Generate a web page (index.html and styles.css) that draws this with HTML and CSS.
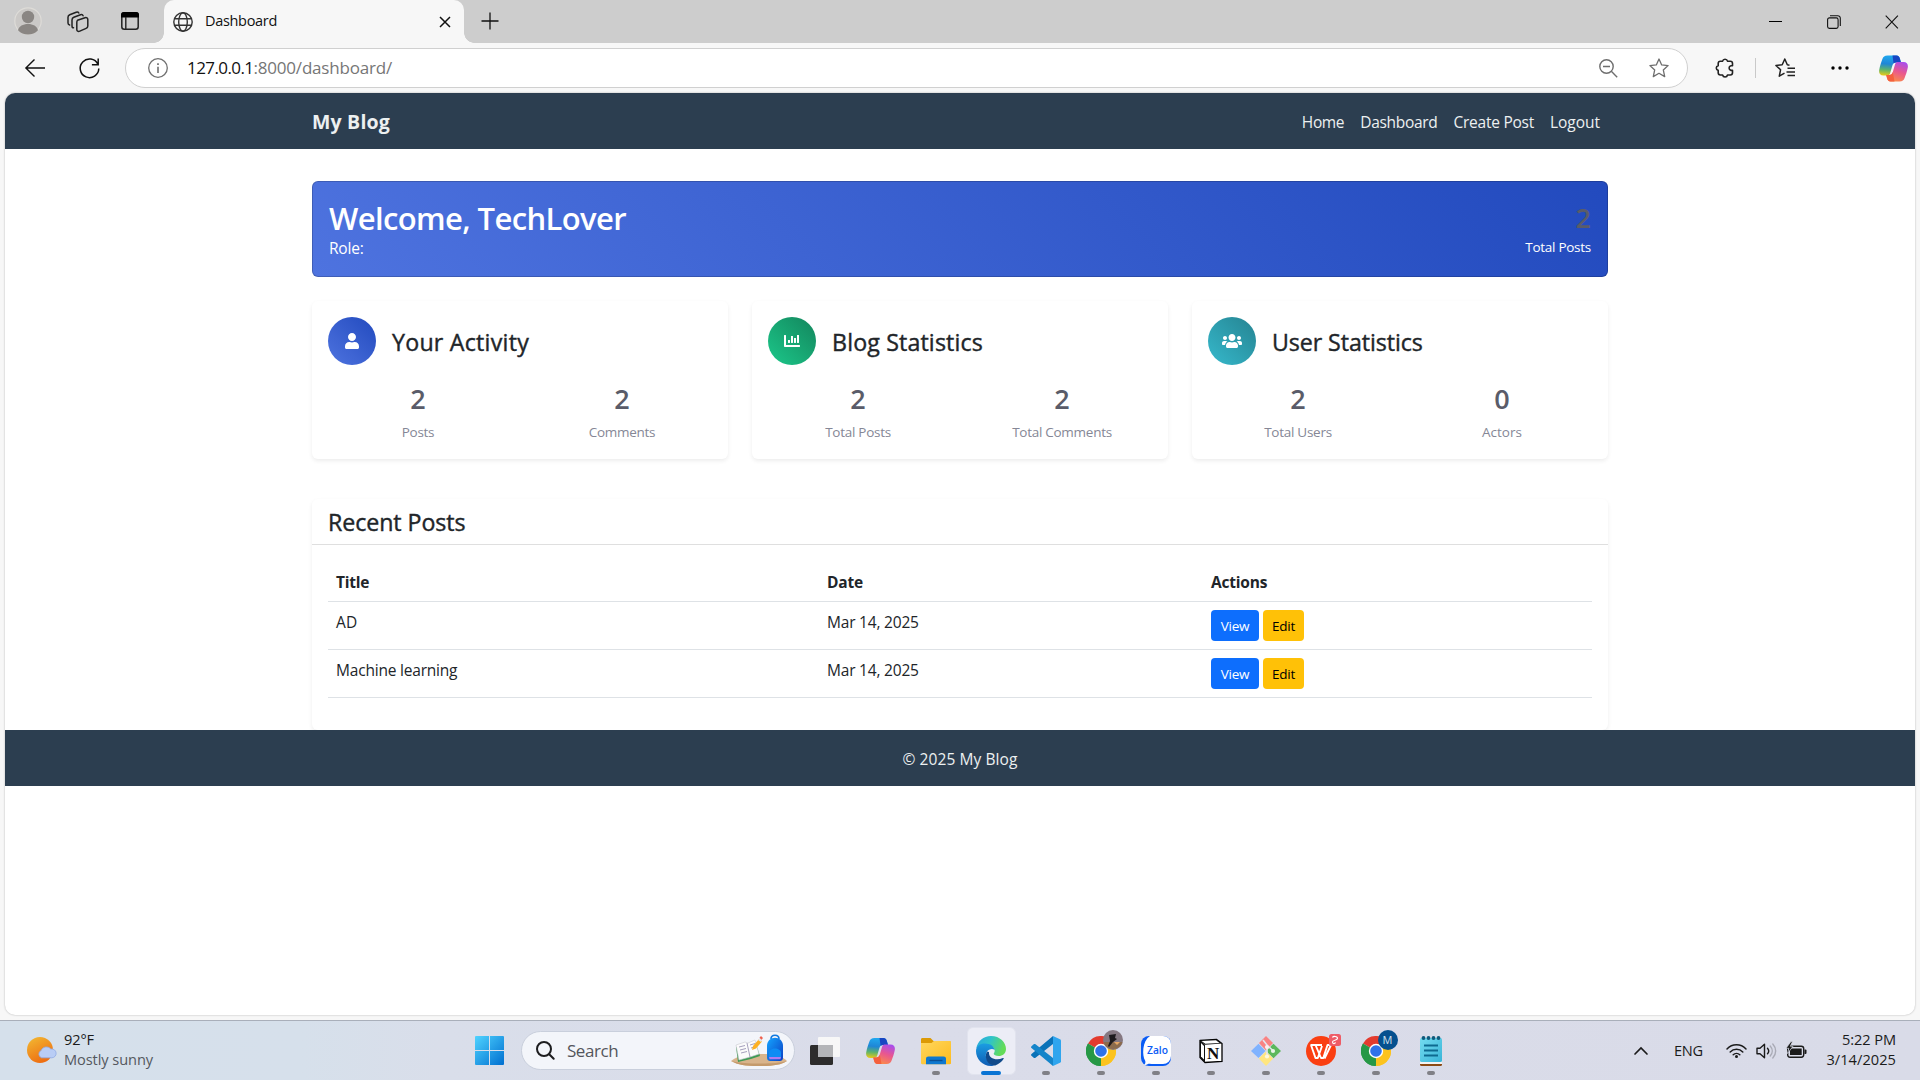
FILE: index.html
```html
<!DOCTYPE html>
<html lang="en">
<head>
<meta charset="utf-8">
<title>Dashboard</title>
<link rel="stylesheet" href="styles.css">
</head>
<body>
<svg class="defs" width="0" height="0">
  <defs>
    <linearGradient id="cpA" x1="0.2" y1="0" x2="0.1" y2="1"><stop offset="0" stop-color="#20a7ee"/><stop offset=".4" stop-color="#1f86d6"/><stop offset=".7" stop-color="#5fb46a"/><stop offset="1" stop-color="#f2cb12"/></linearGradient>
    <linearGradient id="cpB" x1=".8" y1="0" x2=".4" y2="1"><stop offset="0" stop-color="#a64df0"/><stop offset=".5" stop-color="#e9578f"/><stop offset="1" stop-color="#fb8b4a"/></linearGradient>
    <linearGradient id="sun" x1="0" y1="0" x2=".5" y2="1"><stop offset="0" stop-color="#f2bb33"/><stop offset="1" stop-color="#ee6f12"/></linearGradient>
    <linearGradient id="win" x1="0" y1="0" x2="1" y2="1"><stop offset="0" stop-color="#4fd3ff"/><stop offset="1" stop-color="#006fd0"/></linearGradient>
    <linearGradient id="fold" x1="0" y1="0" x2="1" y2="1"><stop offset="0" stop-color="#ffd75e"/><stop offset="1" stop-color="#fdbb1e"/></linearGradient>
    <linearGradient id="edA" x1="0" y1="0" x2="1" y2=".3"><stop offset="0" stop-color="#2aa6e0"/><stop offset=".5" stop-color="#2fc3c9"/><stop offset="1" stop-color="#63dc58"/></linearGradient>
    <linearGradient id="edB" x1="0" y1="0" x2="0" y2="1"><stop offset="0" stop-color="#1b9de2"/><stop offset="1" stop-color="#0f5cb4"/></linearGradient>
    <linearGradient id="bag" x1="0" y1="0" x2="1" y2="1"><stop offset="0" stop-color="#14a4ff"/><stop offset="1" stop-color="#0b3fc4"/></linearGradient>
    <linearGradient id="note" x1="0" y1="0" x2="1" y2="1"><stop offset="0" stop-color="#74dcf0"/><stop offset="1" stop-color="#39b4d8"/></linearGradient>
    <symbol id="copilot" viewBox="0 0 29 26">
      <path d="M8.5 0h9c2 0 3 1.500 3.500 3.500l1 3.500h-5c-2 0-3 1-3.600 3l-2.200 7.500C10.600 19.500 9.500 20 8 20H4.500C1 20-.3 17.500.2 14.500 1 10 2.300 6.500 3.300 3.800 4.200 1.200 5.500 0 8.500 0z" fill="url(#cpA)"/>
      <path d="M13.500 0h4c2 0 3 1.500 3.500 3.500l1 3.500h-5c-1 0-1.800.3-2.400.9z" fill="#1846c2"/>
      <path d="M20.500 26h-9c-2 0-3-1.500-3.500-3.500L7.200 19.500h3c2 0 3-1 3.600-3L16 9c.6-2 1.700-2.500 3.200-2.500h5.300c3.500 0 4.800 2.500 4.300 5.500-.8 4.500-2.100 7.500-3.100 10.200-.9 2.600-2.200 3.800-5.200 3.800z" fill="url(#cpB)"/>
      <path d="M15.500 26h-4c-2 0-3-1.500-3.500-3.500L7.200 19.500h3c2 0 2.900-.8 3.600-3z" fill="#f4603e"/>
    </symbol>
    <symbol id="chrome" viewBox="0 0 30 30">
      <path d="M15 15 2 7.500A15 15 0 0 1 28 7.500z" fill="#e33b2e"/>
      <path d="M15 15 28 7.500A15 15 0 0 1 15 30z" fill="#fcc31e"/>
      <path d="M15 15 15 30A15 15 0 0 1 2 7.500z" fill="#269846"/>
      <path d="M15 8.200h13.400A15 15 0 0 1 15 30l6-11.500z" fill="#fcc31e"/>
      <path d="M2 7.500 9 18.500l6 3.500-1 8A15 15 0 0 1 2 7.500z" fill="#269846"/>
      <circle cx="15" cy="15" r="7.200" fill="#fff"/><circle cx="15" cy="15" r="5.800" fill="#2f72e8"/>
    </symbol>
  </defs>
</svg>
<div class="screen">
  <header class="tabstrip">
    <svg class="avatar" width="28" height="28" viewBox="0 0 28 28"><circle cx="14" cy="14" r="13.200" fill="#cbc9c7" stroke="#dedcd8" stroke-width="1.200"/><circle cx="14" cy="10" r="6.200" fill="#8a8683"/><path d="M4 23.200c1-4 5-6.200 10-6.200s9 2.200 10 6.200A13.500 13.500 0 0 1 14 27.500 13.500 13.500 0 0 1 4 23.200z" fill="#8a8683"/></svg>
    <svg class="workspaces" width="22" height="22" viewBox="0 0 22 22" fill="none" stroke="#222" stroke-width="1.500" stroke-linejoin="round" stroke-linecap="round"><path d="M10.500 9.200l7.500-2.500c1.600-.5 2.800.2 2.800 1.800v6.500c0 1.200-.6 2-1.700 2.400l-6.300 2.700c-1.700.7-3 0-3-1.700v-6.700c0-1.200.2-2 .7-2.500z"/><path d="M6.500 16.800c-1 0-1.500-.8-1.500-1.900V9c0-1.400.6-2.200 1.800-2.700l6.700-2.500c1.200-.4 2.200-.1 2.600.9"/><path d="M2.600 14C1.500 13.800 1 13 1 12V6.300C1 5 1.600 4.200 2.700 3.700l6.500-2.400c1.200-.4 2.100-.2 2.600.7"/></svg>
    <svg class="tabactions" width="18" height="18" viewBox="0 0 18 18"><rect x=".8" y=".8" width="16.400" height="16.400" rx="2.500" fill="none" stroke="#222" stroke-width="1.500"/><path d="M0 5.500V3a3 3 0 0 1 3-3h12a3 3 0 0 1 3 3v2.500z" fill="#000"/><path d="M4.800 5v12" stroke="#222" stroke-width="1.400"/></svg>
    <div class="tab">
      <svg width="20" height="20" viewBox="0 0 20 20" fill="none" stroke="#333" stroke-width="1.400"><circle cx="10" cy="10" r="9.200"/><ellipse cx="10" cy="10" rx="4.300" ry="9.200"/><path d="M1.500 6.800h17M1.500 13.200h17"/></svg>
      <span class="tab-title">Dashboard</span>
      <svg class="tab-close" width="12" height="12" viewBox="0 0 12 12" stroke="#111" stroke-width="1.500"><path d="M1 1l10 10M11 1L1 11"/></svg>
    </div>
    <svg class="newtab" width="18" height="18" viewBox="0 0 18 18" stroke="#111" stroke-width="1.300"><path d="M.5 9h17M9 .5v17"/></svg>
    <div class="winctl">
      <svg width="14" height="14" viewBox="0 0 14 14" stroke="#000"><path d="M0 6.500h13"/></svg>
      <svg width="14" height="14" viewBox="0 0 14 14" fill="none" stroke="#111" stroke-width="1.100"><rect x=".6" y="2.900" width="10.500" height="10.500" rx="1.800"/><path d="M3 .7h7.800a2.500 2.500 0 0 1 2.500 2.500V11"/></svg>
      <svg width="14" height="14" viewBox="0 0 14 14" stroke="#111" stroke-width="1.100"><path d="M.7.700l12.200 12.600M12.900.700L.7 13.300"/></svg>
    </div>
  </header>
  <div class="toolbar">
    <svg class="back" width="20" height="18" viewBox="0 0 20 18" fill="none" stroke="#111" stroke-width="1.400"><path d="M.8 9H20M9.500.6L.9 9l8.600 8.400"/></svg>
    <svg class="reload" width="21" height="21" viewBox="0 0 21 21" fill="none" stroke="#111" stroke-width="1.500"><path d="M18.900 6.300A9.300 9.300 0 1 0 19.800 10.500M19.200.500v6.300h-6.300"/></svg>
    <div class="address">
      <svg width="20" height="20" viewBox="0 0 20 20" fill="none" stroke="#707070" stroke-width="1.300"><circle cx="10" cy="10" r="9.300"/><path d="M10 8.800V15" stroke-width="1.600"/><path d="M10 5.200v1.800" stroke-width="1.700"/></svg>
      <span class="url-host">127.0.0.1</span><span class="url-path">:8000/dashboard/</span>
      <svg class="zoomout" width="19" height="19" viewBox="0 0 19 19" fill="none" stroke="#6e6e6e" stroke-width="1.400"><circle cx="7.500" cy="7.500" r="6.700"/><path d="M4 7.500h7M12.300 12.300l5.900 5.900"/></svg>
      <svg class="star" width="20" height="20" viewBox="0 0 20 20" fill="none" stroke="#6e6e6e" stroke-width="1.300" stroke-linejoin="round"><path d="M10 1l2.700 5.900 6.400.7-4.800 4.300 1.400 6.700L10 15.300l-5.700 3.300 1.400-6.700L.9 7.600l6.400-.7z"/></svg>
    </div>
    <svg class="puzzle" width="20" height="20" viewBox="0 0 20 20" fill="none" stroke="#222" stroke-width="1.600" stroke-linejoin="round"><path d="M3.200 5.400C3.200 4 4 3.200 5.400 3.200h2.200a2.500 2.500 0 0 1 4.900 0h2.800c1.400 0 2.200.8 2.200 2.200v2.300h-1.500a2.400 2.400 0 0 0 0 4.700h1.500v2.400c0 1.400-.8 2.200-2.200 2.200h-2.800a2.500 2.500 0 0 1-4.900 0H5.400c-1.400 0-2.200-.8-2.200-2.200v-2.400a2.400 2.400 0 0 1 0-4.700z"/></svg>
    <i class="sep"></i>
    <svg class="favs" width="21" height="20" viewBox="0 0 21 20" fill="none" stroke="#222" stroke-width="1.500" stroke-linejoin="round"><path d="M14.500 7.200L12.300 6.800 9.800 1 7.200 6.800.9 7.500l4.700 4.200-1.300 6.500 5.200-3M12.500 10.300H20M11.500 14H20M12.500 17.500H20" /></svg>
    <svg class="dots" width="18" height="4" viewBox="0 0 18 4"><circle cx="2" cy="2" r="1.700"/><circle cx="9" cy="2" r="1.700"/><circle cx="16" cy="2" r="1.700"/></svg>
    <svg class="cop" width="29" height="27"><use href="#copilot"/></svg>
  </div>
  <div class="viewport">
    <nav class="navbar">
      <a class="brand">My Blog</a>
      <div class="links"><a class="l1">Home</a><a class="l2">Dashboard</a><a class="l3">Create Post</a><a class="l4">Logout</a></div>
    </nav>
    <main class="container">
      <section class="welcome">
        <div><h2>Welcome, TechLover</h2><p>Role:</p></div>
        <div class="total"><div class="value">2</div><div class="label">Total Posts</div></div>
      </section>
      <section class="cards">
        <article class="card">
          <div class="card-head"><span class="bubble blue"><svg width="14" height="16" viewBox="0 0 448 512" fill="#fff"><path d="M224 256c70.700 0 128-57.300 128-128S294.700 0 224 0 96 57.300 96 128s57.300 128 128 128zm89.600 32h-16.700c-22.200 10.200-46.900 16-72.900 16s-50.600-5.800-72.900-16h-16.700C60.200 288 0 348.200 0 422.400V464c0 26.500 21.500 48 48 48h352c26.500 0 48-21.500 48-48v-41.600c0-74.200-60.200-134.400-134.400-134.400z"/></svg></span><h4 class="h-act">Your Activity</h4></div>
          <div class="stats"><div><div class="value">2</div><div class="label">Posts</div></div><div><div class="value">2</div><div class="label">Comments</div></div></div>
        </article>
        <article class="card">
          <div class="card-head"><span class="bubble green"><svg width="16" height="16" viewBox="0 0 512 512" fill="#fff"><path d="M332.800 320h38.400c6.400 0 12.800-6.400 12.800-12.800V172.800c0-6.400-6.400-12.800-12.800-12.800h-38.400c-6.400 0-12.800 6.400-12.800 12.800v134.400c0 6.400 6.400 12.800 12.800 12.800zm96 0h38.400c6.400 0 12.800-6.400 12.800-12.800V76.800c0-6.400-6.400-12.800-12.800-12.800h-38.400c-6.400 0-12.800 6.400-12.800 12.800v230.400c0 6.400 6.400 12.800 12.800 12.800zm-288 0h38.400c6.400 0 12.800-6.400 12.800-12.800v-70.400c0-6.400-6.400-12.800-12.800-12.800h-38.400c-6.400 0-12.800 6.400-12.800 12.800v70.400c0 6.400 6.400 12.800 12.800 12.800zm96 0h38.400c6.400 0 12.800-6.400 12.800-12.800V108.800c0-6.400-6.400-12.800-12.800-12.800h-38.400c-6.400 0-12.800 6.400-12.800 12.800v198.400c0 6.400 6.400 12.800 12.800 12.800zM496 384H64V80c0-8.840-7.160-16-16-16H16C7.160 64 0 71.160 0 80v336c0 17.670 14.330 32 32 32h464c8.840 0 16-7.160 16-16v-32c0-8.840-7.160-16-16-16z"/></svg></span><h4 class="h-blog">Blog Statistics</h4></div>
          <div class="stats"><div><div class="value">2</div><div class="label">Total Posts</div></div><div><div class="value">2</div><div class="label">Total Comments</div></div></div>
        </article>
        <article class="card">
          <div class="card-head"><span class="bubble teal"><svg width="20" height="16" viewBox="0 0 640 512" fill="#fff"><path d="M96 224c35.300 0 64-28.700 64-64s-28.700-64-64-64-64 28.700-64 64 28.700 64 64 64zm448 0c35.300 0 64-28.700 64-64s-28.700-64-64-64-64 28.700-64 64 28.700 64 64 64zm32 32h-64c-17.600 0-33.500 7.100-45.100 18.600 40.300 22.100 68.900 62 75.100 109.400h66c17.700 0 32-14.300 32-32v-32c0-35.300-28.700-64-64-64zm-256 0c61.900 0 112-50.100 112-112S381.900 32 320 32 208 82.100 208 144s50.100 112 112 112zm76.800 32h-8.300c-20.800 10-43.900 16-68.500 16s-47.600-6-68.500-16h-8.300C179.600 288 128 339.600 128 403.200V432c0 26.500 21.500 48 48 48h288c26.500 0 48-21.500 48-48v-28.800c0-63.600-51.600-115.200-115.200-115.200zm-223.700-13.400C161.500 263.100 145.600 256 128 256H64c-35.300 0-64 28.700-64 64v32c0 17.700 14.300 32 32 32h65.900c6.300-47.400 34.900-87.300 75.200-109.400z"/></svg></span><h4 class="h-user">User Statistics</h4></div>
          <div class="stats"><div><div class="value">2</div><div class="label">Total Users</div></div><div><div class="value">0</div><div class="label actors">Actors</div></div></div>
        </article>
      </section>
      <section class="recent">
        <div class="recent-head"><h4>Recent Posts</h4></div>
        <div class="recent-body">
          <table>
            <thead><tr><th class="c1">Title</th><th class="c2">Date</th><th>Actions</th></tr></thead>
            <tbody>
              <tr><td><span class="short">AD</span></td><td>Mar 14, 2025</td><td><div class="btns"><a class="btn view">View</a><a class="btn edit">Edit</a></div></td></tr>
              <tr><td>Machine learning</td><td>Mar 14, 2025</td><td><div class="btns"><a class="btn view">View</a><a class="btn edit">Edit</a></div></td></tr>
            </tbody>
          </table>
        </div>
      </section>
    </main>
    <footer class="footer">© 2025 My Blog</footer>
  </div>
  <div class="taskbar">
    <div class="weather">
      <svg width="30" height="28" viewBox="0 0 30 28"><circle cx="13" cy="14" r="13" fill="url(#sun)"/><path d="M14.500 21.800a4 4 0 0 1-.3-7.400 5.600 5.600 0 0 1 9.600-1.300 4.400 4.400 0 1 1 1 8.700z" fill="#b9cdf5" stroke="#8fabe6" stroke-width=".8"/></svg>
      <div><div class="temp">92°F</div><div class="cond">Mostly sunny</div></div>
    </div>
    <div class="tile start"><svg width="29" height="29" viewBox="0 0 29 29" fill="url(#win)"><path d="M1 0h13v14H0V1a1 1 0 0 1 1-1zM15 0h13a1 1 0 0 1 1 1v13H15zM0 15h14v14H1a1 1 0 0 1-1-1zM15 15h14v13a1 1 0 0 1-1 1H15z"/></svg></div>
    <div class="search">
      <svg width="19" height="19" viewBox="0 0 19 19" fill="none" stroke="#1d1d1f" stroke-width="2" stroke-linecap="round"><circle cx="8" cy="8" r="7"/><path d="M13.200 13.200l4.500 4.600"/></svg>
      <span class="sr">Search</span>
      <svg class="art" width="58" height="32" viewBox="0 0 58 32"><path d="M1 26C8 20 20 19 32 19s20 2 25 7c-6 4-14 5-28 5S8 30 1 26z" fill="#d8b48c"/><path d="M1 26c8 2 18 2.500 28 2.500S50 28 57 26c-6 4-14 5-28 5S8 30 1 26z" fill="#c49a6c"/><path d="M6 12l9-2 4 1 7-2 4 12-9 3-13 3z" fill="#3f9a55"/><path d="M6 10l9-3 3 1 7-3 4 14-9 3-11 3z" fill="#fbfbfb" stroke="#c9c9d2" stroke-width=".6"/><path d="M17 8l3 14M9 12l6-1.500M10 15l6-1.500M11 18l6-1.500M20 10l5-1.500M21 13l5-1.500" stroke="#9b95b5" stroke-width=".9"/><path d="M22 15l1-4 6-7 3 2.500-6 7z" fill="#fdb022"/><path d="M28 5l2-2.500 2.500 2.300L31 7z" fill="#e7e7ea"/><path d="M29.500 2.800L31 1l2 2-1.500 1.800z" fill="#f0604d"/><path d="M41 4c0-5 8-5 8 0" fill="none" stroke="#1079e0" stroke-width="1.600"/><path d="M37 11c0-11 16-11 16 0v11c0 3-1 4-4 4h-8c-3 0-4-1-4-4z" fill="url(#bag)"/><path d="M39 22v-4c0-6 12-6 12 0v4z" fill="#0e8cf4"/><path d="M39 22h12l-.6 2.300H39.600z" fill="#b07cf0"/></svg>
    </div>
    <div class="tile first"><svg width="30" height="30" viewBox="0 0 30 30"><rect x="-1" y="9" width="23" height="20" rx="1.500" fill="#2d2c2c"/><rect x="7" y="1" width="22" height="20" rx="1" fill="#f7f7f7"/><rect x="7" y="9" width="15" height="12" fill="#b4b5b8"/></svg></div>
    <div class="tile assist"><svg width="29" height="26"><use href="#copilot"/></svg></div>
    <div class="tile"><svg width="30" height="30" viewBox="0 0 30 30"><path d="M0 3.500C0 2.500.6 2 1.500 2h8l3 3H28c1.200 0 2 .8 2 2v5H0z" fill="#dc9a06"/><path d="M0 7h10.500L13 5h15.500c1 0 1.500.5 1.500 1.500V27c0 .8-.4 1.200-1.200 1.200H1.200C.4 28.200 0 27.800 0 27z" fill="url(#fold)"/><path d="M5 28.200V23c0-1.700.8-2.500 2.500-2.500h15c1.700 0 2.500.8 2.500 2.500v5.200z" fill="#0f78cf"/><path d="M8.500 24.500h13" stroke="#0b4f94" stroke-width="1.400"/></svg><i class="run"></i></div>
    <div class="tile active"><svg width="30" height="30" viewBox="0 0 30 30"><path d="M.3 12.500C1.500 5 7.500 0 15 0c9 0 15 6.500 15 13 0 4.500-3.500 7-7.300 7-3 0-5-1-5-2.200 0-.8 1-1.200 1-3 0-3-3-5.800-7.500-5.800-5 0-9 1.500-10.900 3.500z" fill="url(#edA)"/><path d="M0 15C.2 10 4 7.500 9 7.500c5.500 0 9 2.800 9.700 6.500-2-1.700-6-1-7.700 1.500-3.500 5 1 13 9 12.500-1.500 1.400-3.500 2-5 2C6.500 30 0 23 0 15z" fill="url(#edB)"/><path d="M11 15.500c-3.200 5.500 0 14 8.200 13.900 3.500-1.200 6.500-3.300 8.500-6.600.3-.7-.2-1-.8-.7-6.500 3-14.600.5-13.900-6.100z" fill="#114a8b"/></svg><i class="run on"></i></div>
    <div class="tile"><svg width="30" height="30" viewBox="0 0 30 30"><path d="M22 0l7 3.200c.6.300 1 .8 1 1.500v20.600c0 .7-.4 1.200-1 1.500L22 30z" fill="#2fa5ee"/><path d="M22 0v8L4.500 21.700c-.6.500-1.300.4-1.800 0L.5 19.800c-.6-.6-.6-1.300 0-1.900z" fill="#0a72b8"/><path d="M22 30v-8L4.500 8.300c-.6-.5-1.300-.4-1.800 0L.5 10.200c-.6.600-.6 1.300 0 1.900z" fill="#1585ca"/></svg><i class="run"></i></div>
    <div class="tile"><svg width="30" height="30"><use href="#chrome"/></svg><svg class="badge" width="20" height="20" viewBox="0 0 20 20"><circle cx="10" cy="10" r="10" fill="#857881"/><path d="M.5 12h19A10 10 0 0 1 .5 12z" fill="#8c6b4c"/><path d="M6 5l7-1-1 4 2 1-4 3-4 5-1-1 2-5z" fill="#1e1a1c"/><path d="M11 12h6l-3 3z" fill="#e5a765"/></svg><i class="run"></i></div>
    <div class="tile"><svg width="30" height="30" viewBox="0 0 30 30"><rect width="30" height="30" rx="8" fill="#0a5cf5"/><path d="M9 0h13a8 8 0 0 1 8 8v12a8 8 0 0 1-8 8H13c-3 0-5-.8-6.500.3-1 .7-2.500.8-3.500.5 1.300-1 1.700-2 1.200-4C1 20 1 5 9 0z" fill="#fff"/><text x="6" y="17.500" class="zalo" textLength="21" lengthAdjust="spacingAndGlyphs">Zalo</text></svg><i class="run"></i></div>
    <div class="tile"><svg width="30" height="30" viewBox="0 0 30 30"><path d="M4 4.500L20.500 3.500 26 7.500V25.500L9 26.500 4 21.500z" fill="#fff" stroke="#000" stroke-width="1.300"/><path d="M4 4.500L9 9v17.500L4 21.500zM4 4.500l16.500-1L26 7.500 9 8.800z" fill="#111"/><path d="M5.500 5l14.500-.8L23.500 7 9.300 7.800z" fill="#fff"/><path d="M5 7l3 3v13.500L5 20.500z" fill="#fff"/><text x="11" y="22.500" class="notion">N</text></svg><i class="run"></i></div>
    <div class="tile"><svg width="30" height="30" viewBox="0 0 30 30"><path d="M15 0l7 7-7 7.500-7-7.500z" fill="#f98383"/><path d="M7.500 7.700l7 7.300-7 7L0 15z" fill="#80b3ff"/><path d="M22.500 7.700L30 15l-7.500 7.200L15 15z" fill="#5cb85c"/><path d="M15 15.500l7.200 7L15 30l-7.200-7.500z" fill="#ffe680"/><path d="M12 4l4 5v12M15.500 9l6 5" stroke="#e4e5ee" stroke-width="1.600" fill="none"/><circle cx="16" cy="11" r="2.100" fill="#fbeeee"/><circle cx="22" cy="15" r="2.100" fill="#e8f5e8"/><circle cx="16" cy="20.500" r="2.100" fill="#fdf8dd"/></svg><i class="run"></i></div>
    <div class="tile"><svg width="30" height="30" viewBox="0 0 30 30"><circle cx="15" cy="15" r="15" fill="#fa3f12"/><path d="M4.500 9H16M5 9l4.500 13h2.300L16 10M9.500 9l5.500 13h2.300L21.500 9H26M18.500 22.500L25 9" fill="none" stroke="#fff" stroke-width="1.900" stroke-linejoin="round"/></svg><svg class="badge wps" width="12" height="12" viewBox="0 0 12 12"><rect width="12" height="12" rx="2.500" fill="#ee5c66"/><path d="M3.500 3.500C4 2 8.500 2 8.500 4.300 8.500 7 3.500 5.500 3.500 8c0 2 2.500 2 3 .3" fill="none" stroke="#fff" stroke-width="1.200"/></svg><i class="run"></i></div>
    <div class="tile"><svg width="30" height="30"><use href="#chrome"/></svg><span class="badge m">M</span><i class="run"></i></div>
    <div class="tile"><svg width="30" height="30" viewBox="0 0 30 30"><rect x="4" y="26" width="22" height="4" rx="1.500" fill="#8c4a14"/><rect x="4" y="24" width="22" height="4" fill="#f3f3f3"/><rect x="4" y="2" width="22" height="24" rx="1.500" fill="url(#note)"/><path d="M8 9.500h14M8 14.500h14M8 19.500h14" stroke="#0e6a90" stroke-width="1.800"/><g fill="#0f5b7c"><circle cx="7.500" cy="2" r="1.900"/><circle cx="12.500" cy="2" r="1.900"/><circle cx="17.500" cy="2" r="1.900"/><circle cx="22.500" cy="2" r="1.900"/></g></svg><i class="run"></i></div>
    <div class="tray">
      <svg class="chev" width="14" height="8" viewBox="0 0 14 8" fill="none" stroke="#1b1b1b" stroke-width="1.700" stroke-linecap="round"><path d="M1 7l6-6 6 6"/></svg>
      <span class="lang">ENG</span>
      <svg class="wifi" width="21" height="16" viewBox="0 0 21 16" fill="none" stroke="#1b1b1b" stroke-width="1.500" stroke-linecap="round"><path d="M1 6a13 13 0 0 1 19 0M4.200 9a8.800 8.800 0 0 1 12.600 0M7.200 11.800a4.800 4.800 0 0 1 6.600 0"/><circle cx="10.500" cy="13.500" r="1.500" fill="#1b1b1b" stroke="none"/></svg>
      <svg class="vol" width="21" height="16" viewBox="0 0 21 16" fill="none" stroke="#1b1b1b" stroke-width="1.400" stroke-linejoin="round" stroke-linecap="round"><path d="M1 5.200h3L8.500 1.200v13.600L4 10.800H1z"/><path d="M11.500 5.200c1.400 1.600 1.400 4 0 5.600"/><path d="M14.200 3c2.700 3 2.700 7 0 10M16.800 1c3.800 4.200 3.800 9.800 0 14" stroke="#a9aab5"/></svg>
      <svg class="bat" width="21" height="16" viewBox="0 0 21 16"><rect x="1.700" y="3.200" width="16" height="11" rx="2.400" fill="none" stroke="#1b1b1b" stroke-width="1.400"/><path d="M4 5.500h11.700v6.500H4z" fill="#1b1b1b"/><path d="M18.500 6.500h1a1 1 0 0 1 1 1v2.500a1 1 0 0 1-1 1h-1z" fill="#1b1b1b"/><path d="M5-1.500L0 5.300h2.800L1.500 10.500 7 3.300H4.300L6.500-1.500z" fill="#1b1b1b" stroke="#d9dbe8" stroke-width=".7"/></svg>
      <div class="clock"><div>5:22 PM</div><div class="date">3/14/2025</div></div>
    </div>
  </div>
</div>
</body>
</html>
```
FILE: styles.css
```css
* { box-sizing: border-box; }
body { margin: 0; font-family: "Open Sans", "Noto Sans", sans-serif; color: #212529; background: #f7f7f7; }
h2, h4, p { margin: 0; }
svg { display: block; flex: none; overflow: visible; }
.defs { position: absolute; }
.screen { width: 1920px; height: 1080px; display: flex; flex-direction: column; overflow: hidden; white-space: nowrap; }

/* browser chrome */
.tabstrip { height: 43px; flex: none; display: flex; background: #cdcdcd; }
.avatar { margin: 7px 0 0 14px; }
.workspaces { margin: 11px 0 0 25px; }
.tabactions { margin: 12px 0 0 32px; }
.tab { position: relative; width: 300px; height: 43px; margin-left: 25px; padding: 0 13px 0 9px; display: flex; align-items: center; background: #f7f7f7; border-radius: 10px 10px 0 0; }
.tab::before, .tab::after { content: ""; position: absolute; bottom: 0; width: 10px; height: 10px; }
.tab::before { left: -10px; background: radial-gradient(circle at 0 0, #cdcdcd 9.500px, #f7f7f7 10px); }
.tab::after { right: -10px; background: radial-gradient(circle at 100% 0, #cdcdcd 9.500px, #f7f7f7 10px); }
.tab-title { margin: -2px auto 0 12px; font-size: 14.500px; letter-spacing: -.316px; color: #111; }
.newtab { margin: 12px 0 0 17px; }
.winctl { display: flex; gap: 44px; margin: 15px 21px 0 auto; }
.toolbar { height: 50px; flex: none; display: flex; align-items: center; }
.back { margin-left: 25px; }
.reload { margin-left: 34px; }
.address { width: 1563px; height: 40px; margin: 0 0 0 25px; padding: 0 18px 0 22px; display: flex; align-items: center; background: #fff; border: 1px solid #d0d0d0; border-radius: 20px; font-size: 17px; }
.url-host { margin: -2px 0 0 19px; letter-spacing: -.58px; color: #111; }
.url-path { margin-top: -2px; letter-spacing: -.2px; color: #767676; }
.zoomout { margin-left: auto; }
.star { margin-left: 31px; }
.puzzle { margin-left: 27px; }
.sep { width: 1px; height: 20px; margin-left: 20px; background: #c9c9c9; }
.favs { margin-left: 19px; }
.dots { margin-left: 35px; }
.cop { margin-left: 30px; }

/* page */
.viewport { height: 922px; flex: none; margin: 0 5px; background: #fff; border-radius: 10px; overflow: hidden; box-shadow: 0 0 2px rgba(0,0,0,.3); }
.navbar { height: 56px; padding: 0 315px 0 307px; display: flex; align-items: center; justify-content: space-between; background: #2c3e50; color: #ecf0f1; }
.brand { font-size: 19.500px; font-weight: 700; letter-spacing: .188px; }
.links { display: flex; gap: 16px; margin-top: 1px; font-size: 15.500px; }
.l1 { letter-spacing: -.35px; }
.l2 { letter-spacing: -.3px; }
.l3 { letter-spacing: -.249px; }
.l4 { letter-spacing: -.031px; }
.container { width: 1296px; margin: 32px auto 0; }
.welcome { height: 96px; padding: 16px; display: flex; justify-content: space-between; align-items: center; color: #fff; border: 1px solid rgba(0,0,0,.175); border-radius: 6px; background: linear-gradient(45deg, #4e73df, #224abe) border-box; }
h2 { font-size: 31px; line-height: 40px; margin-bottom: -2px; font-weight: 600; letter-spacing: -.615px; }
.welcome p { font-size: 15.500px; line-height: 24px; letter-spacing: -.219px; }
.total { text-align: right; }
.value { font-size: 27px; line-height: 33px; font-weight: 600; color: #5a5c69; }
.label { padding-top: 3px; font-size: 13.500px; line-height: 21px; letter-spacing: -.27px; }
.cards { display: grid; grid-template-columns: repeat(3, 1fr); gap: 24px; margin-top: 24px; }
.card { height: 158px; padding: 16px; border-radius: 6px; box-shadow: 0 2px 4px rgba(0,0,0,.075); }
.card-head { display: flex; align-items: center; }
.bubble { width: 48px; height: 48px; margin-right: 16px; display: flex; align-items: center; justify-content: center; border-radius: 50%; }
.blue { background: linear-gradient(45deg, #4e73df, #224abe); }
.green { background: linear-gradient(45deg, #1cc88a, #13855c); }
.teal { background: linear-gradient(45deg, #36b9cc, #258391); }
h4 { font-size: 23.200px; line-height: 29px; font-weight: 500; letter-spacing: -.061px; -webkit-text-stroke: .4px #212529; }
.card-head h4 { margin-top: 2px; }
.card-head .h-act { letter-spacing: .243px; }
.card-head .h-blog { letter-spacing: .15px; }
.card-head .h-user { letter-spacing: -.07px; }
.stats { display: grid; grid-template-columns: 1fr 1fr; margin: 17px -12px 0; text-align: center; }
.stats .label { padding-top: 7px; color: #858796; }
.stats .actors { letter-spacing: 0; }
.recent { margin-top: 40px; border-radius: 6px; box-shadow: 0 2px 4px rgba(0,0,0,.075); }
.recent-head { padding: 9px 16px 8px; height: 46px; border-bottom: 1px solid #dfdfdf; }
.recent-body { padding: 16px; height: 185px; }
table { width: 100%; border-collapse: collapse; table-layout: fixed; font-size: 15.500px; line-height: 24px; letter-spacing: -.2px; }
th, td { padding: 8px; text-align: left; vertical-align: top; border-bottom: 1px solid #dee2e6; }
th { padding: 9px 8px 7px; font-weight: 700; }
.short { letter-spacing: .2px; }
.c1 { width: 491px; }
.c2 { width: 384px; }
.btns { display: flex; gap: 4px; }
.btn { height: 31px; padding: 6px 0 4px; line-height: 21px; font-size: 13.500px; text-align: center; border-radius: 4px; }
.view { width: 48px; color: #fff; background: #0d6efd; }
.edit { width: 41px; color: #000; background: #ffc107; }
.footer { position: relative; height: 56px; padding-top: 1px; display: flex; align-items: center; justify-content: center; background: #2c3e50; color: #ecf0f1; font-size: 15.500px; letter-spacing: .085px; }

/* taskbar */
.taskbar { height: 60px; margin-top: 5px; flex: none; display: flex; align-items: center; border-top: 1px solid #a9afba; background: linear-gradient(90deg, #d5e0eb 0, #d6e0eb 300px, #d9deea 440px, #dadce9 900px, #d9dbe8 100%); }
.weather { width: 462px; margin-top: -4px; display: flex; padding-left: 27px; font-size: 14.600px; line-height: 20px; color: #1b1b1b; }
.weather svg { margin: 7px 7px 0 0; }
.temp { letter-spacing: -.12px; }
.cond { letter-spacing: -.08px; color: #54585e; }
.tile { position: relative; width: 55px; height: 48px; flex: none; display: flex; align-items: center; justify-content: center; }
.assist svg { margin-right: 2px; }
.search { width: 274px; height: 39px; margin: 0 3.500px 0 4px; padding: 0 6px 0 14px; display: flex; align-items: center; flex: none; background: #f3f5fa; border: 1px solid #c9cfdc; border-radius: 20px; font-size: 17px; letter-spacing: -.45px; color: #54565c; }
.search .sr { margin-left: 12px; }
.art { margin-left: auto; }
.active::before { content: ""; position: absolute; inset: 0 3px; background: #ecedf6; border: 1px solid #e1e3ee; border-radius: 6px; }
.active svg { position: relative; }
.run { position: absolute; left: 23.500px; bottom: 0; width: 8px; height: 4px; border-radius: 2px; background: #808086; }
.run.on { left: 17.500px; width: 20px; background: #0a74d4; }
.badge { position: absolute; left: 29px; top: 3px; }
.wps { left: 35px; top: 7px; }
.m { width: 20px; height: 20px; border-radius: 50%; background: #05508f; color: #cfe0ee; font-size: 11px; line-height: 20px; text-align: center; }
.zalo { font: 600 10.500px "Open Sans", sans-serif; fill: #0a5cf5; }
.notion { font: 700 17px "Liberation Serif", serif; fill: #111; }
.tray { margin-left: auto; padding-right: 24px; display: flex; align-items: center; font-size: 14.600px; color: #1b1b1b; }
.lang { margin: -2px 0 0 26px; letter-spacing: -.24px; }
.wifi { margin-left: 23px; }
.vol, .bat { margin-left: 9px; }
.clock { width: 70px; margin: -4px 0 0 19px; line-height: 20px; text-align: right; letter-spacing: -.08px; }
.date { letter-spacing: .05px; }
```
